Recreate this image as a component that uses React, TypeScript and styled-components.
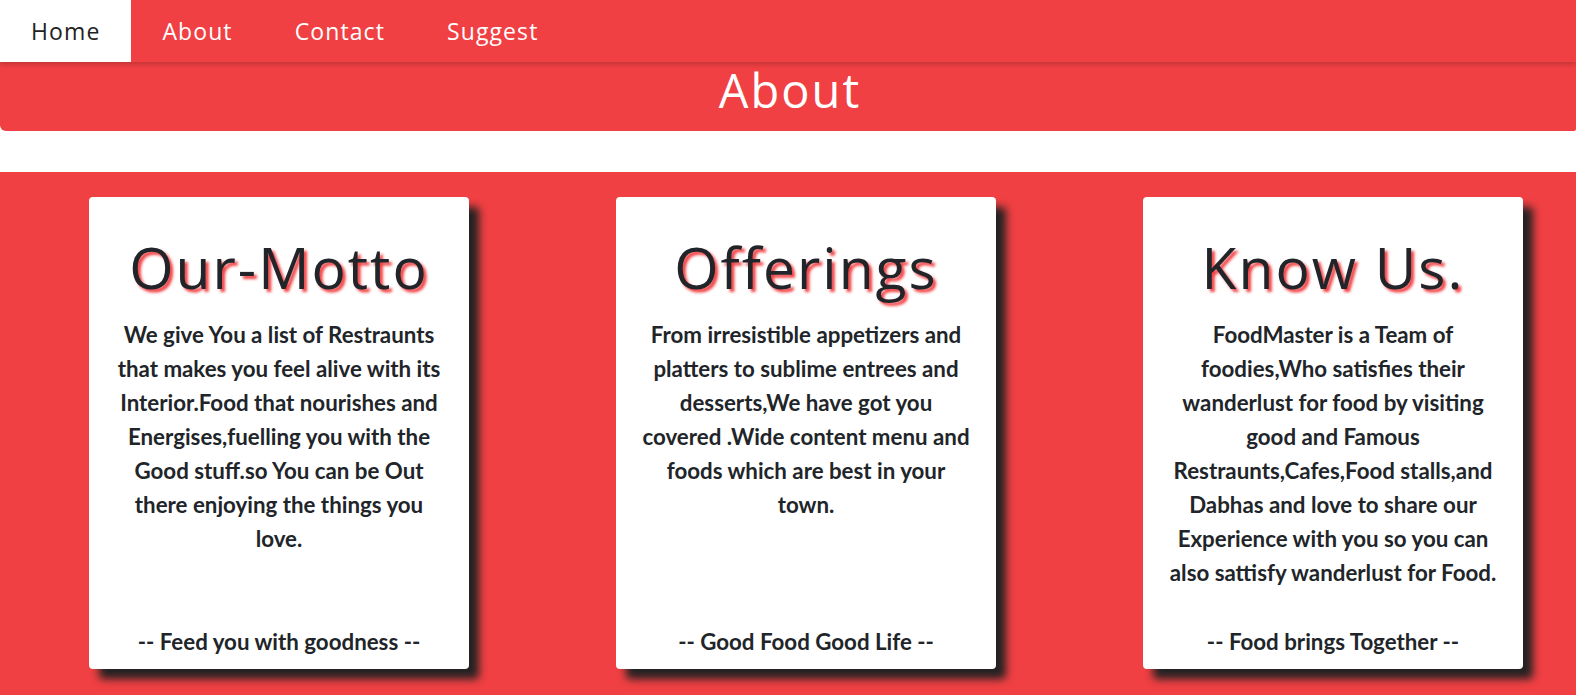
import React from "react";
import styled, { createGlobalStyle } from "styled-components";

const RED = "#f14043";
const INK = "#212529";
const HEAD_FONT = `"Open Sans", "DejaVu Sans", sans-serif`;

const Global = createGlobalStyle`
  html, body { margin: 0; padding: 0; background: #fff; }
  body { font-family: "Lato", sans-serif; color: ${INK}; overflow: hidden; }
  * { box-sizing: border-box; }
`;

const Nav = styled.nav`
  position: relative;
  z-index: 2;
  display: flex;
  height: 62px;
  background: ${RED};
  box-shadow: 0 2px 5px rgba(0, 0, 0, 0.22);
`;

const NavItem = styled.a<{ $active?: boolean }>`
  display: flex;
  align-items: center;
  padding: 0 31px;
  font-family: ${HEAD_FONT};
  font-size: 23px;
  letter-spacing: 1.1px;
  font-weight: 400;
  text-decoration: none;
  color: ${(p) => (p.$active ? "#222" : "#fff")};
  background: ${(p) => (p.$active ? "#fff" : "transparent")};
`;

const Banner = styled.header`
  position: relative;
  z-index: 1;
  height: 69px;
  background: ${RED};
  border-radius: 0 0 2px 6px;
  display: flex;
  justify-content: center;
  align-items: flex-start;
`;

const BannerTitle = styled.h1`
  margin: 0;
  font-family: ${HEAD_FONT};
  font-weight: 400;
  font-size: 47px;
  letter-spacing: 2px;
  line-height: 56px;
  color: #fff;
  padding-left: 4px;
`;

const Spacer = styled.div`
  height: 41px;
`;

const Section = styled.section`
  background: ${RED};
  height: 523px;
  padding: 25px 0 0 89px;
  display: flex;
  gap: 147px;
  align-items: flex-start;
`;

const Card = styled.article`
  width: 380px;
  height: 472px;
  background: #fff;
  border-radius: 4px;
  box-shadow: 10px 10px 8px #222;
  display: flex;
  flex-direction: column;
  align-items: center;
  padding: 35px 22px 10px;
  text-align: center;
`;

const CardTitle = styled.h2`
  margin: 0 0 16px;
  font-family: ${HEAD_FONT};
  font-weight: 400;
  font-size: 57px;
  line-height: 70px;
  letter-spacing: 2px;
  color: ${INK};
  text-shadow: 3px 3px 3px ${RED};
  white-space: nowrap;
`;

const CardText = styled.p`
  margin: 0;
  flex: 1;
  font-family: "Lato", sans-serif;
  font-weight: 700;
  font-size: 22.3px;
  line-height: 34px;
  color: ${INK};
`;

const CardFoot = styled.p`
  margin: 0;
  font-family: "Lato", sans-serif;
  font-weight: 700;
  font-size: 22.3px;
  line-height: 34px;
  color: ${INK};
`;

const cards = [
  {
    title: "Our-Motto",
    text: "We give You a list of Restraunts that makes you feel alive with its Interior.Food that nourishes and Energises,fuelling you with the Good stuff.so You can be Out there enjoying the things you love.",
    foot: "-- Feed you with goodness --",
  },
  {
    title: "Offerings",
    text: "From irresistible appetizers and platters to sublime entrees and desserts,We have got you covered .Wide content menu and foods which are best in your town.",
    foot: "-- Good Food Good Life --",
  },
  {
    title: "Know Us.",
    text: "FoodMaster is a Team of foodies,Who satisfies their wanderlust for food by visiting good and Famous Restraunts,Cafes,Food stalls,and Dabhas and love to share our Experience with you so you can also sattisfy wanderlust for Food.",
    foot: "-- Food brings Together --",
  },
];

export default function App() {
  return (
    <>
      <Global />
      <Nav>
        <NavItem $active href="#">Home</NavItem>
        <NavItem href="#">About</NavItem>
        <NavItem href="#">Contact</NavItem>
        <NavItem href="#">Suggest</NavItem>
      </Nav>
      <Banner>
        <BannerTitle>About</BannerTitle>
      </Banner>
      <Spacer />
      <Section>
        {cards.map((c) => (
          <Card key={c.title}>
            <CardTitle>{c.title}</CardTitle>
            <CardText>{c.text}</CardText>
            <CardFoot>{c.foot}</CardFoot>
          </Card>
        ))}
      </Section>
    </>
  );
}
